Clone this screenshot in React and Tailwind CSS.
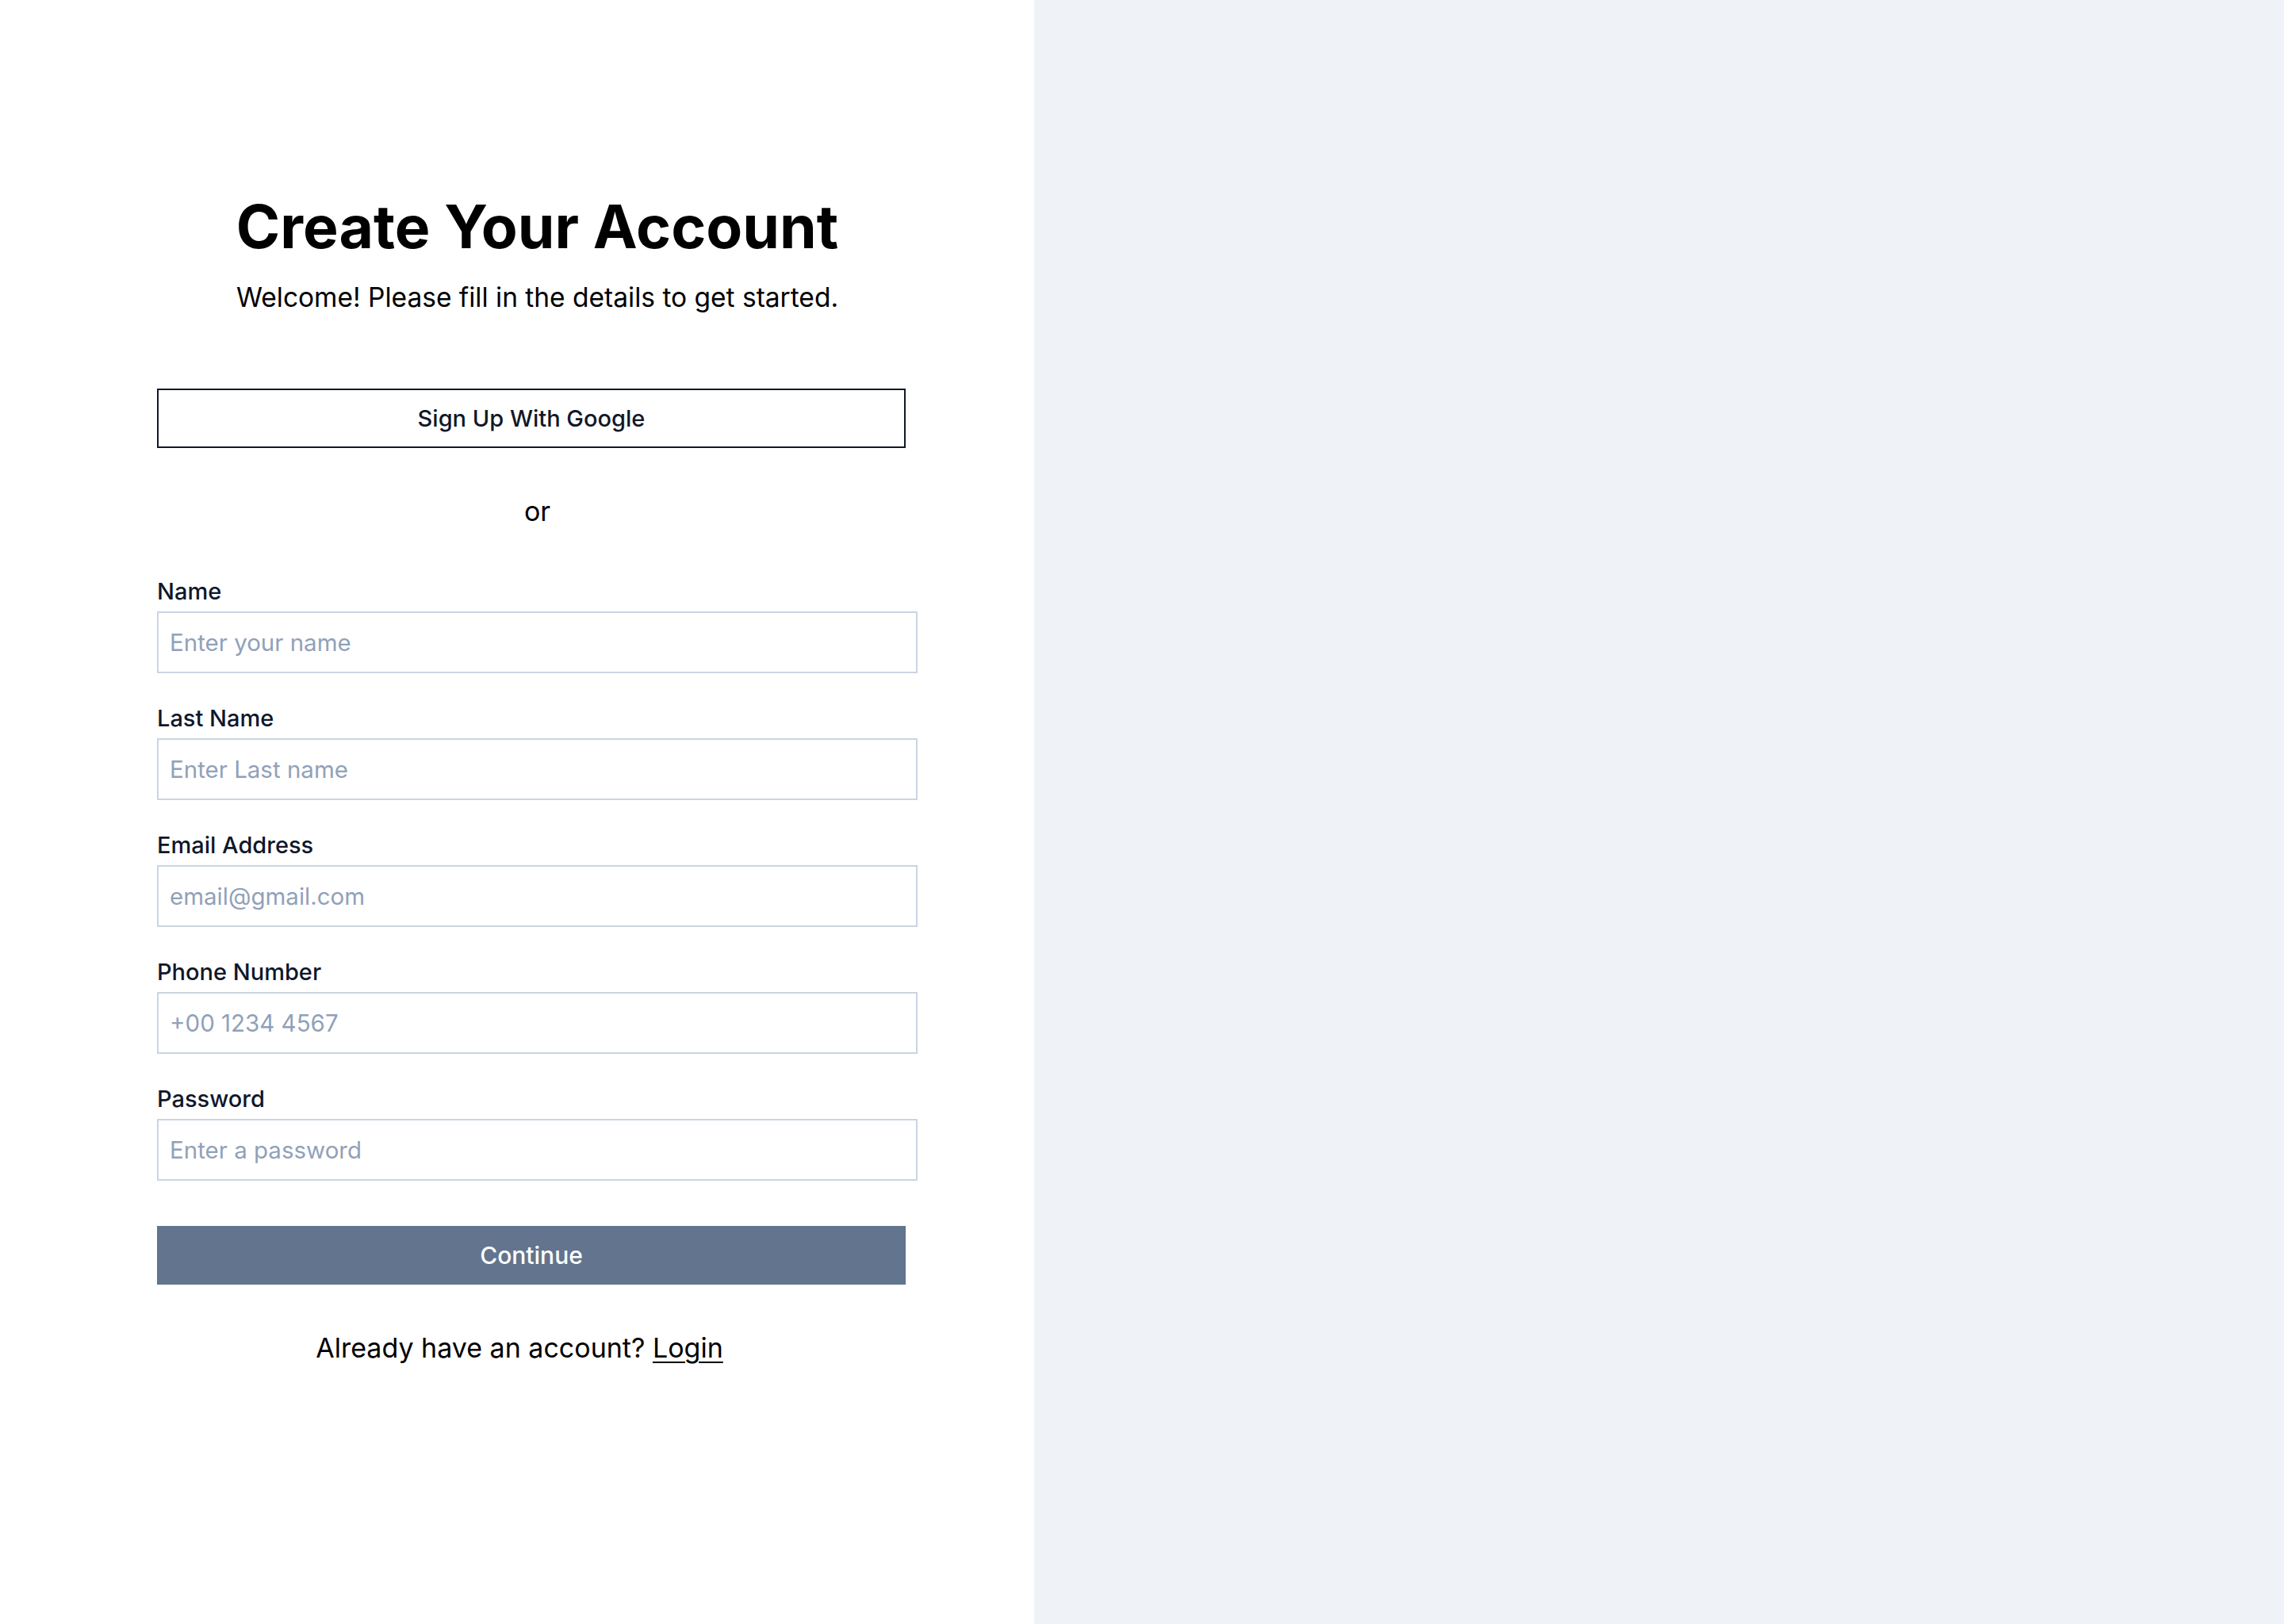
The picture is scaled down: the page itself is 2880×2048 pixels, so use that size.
import React, { useState } from 'react';

const fields = [
    { name: 'name', label: 'Name', placeholder: 'Enter your name', type: 'text' },
    { name: 'lastName', label: 'Last Name', placeholder: 'Enter Last name', type: 'text' },
    { name: 'email', label: 'Email Address', placeholder: 'email@gmail.com', type: 'email' },
    { name: 'phone', label: 'Phone Number', placeholder: '+00 1234 4567', type: 'tel' },
    { name: 'password', label: 'Password', placeholder: 'Enter a password', type: 'password' },
];

const App = () => {
    const [formData, setFormData] = useState({
        name: '',
        lastName: '',
        email: '',
        phone: '',
        password: ''
    });

    const handleChange = (e) => {
        const { name, value } = e.target;
        setFormData(prev => ({ ...prev, [name]: value }));
    };

    return (
        <div className="flex h-screen w-full font-[Inter,'Noto_Sans',sans-serif]">
            <div className="w-[1304px] shrink-0 bg-white pl-[198px] pt-[250px]">
                <div className="flex w-[959px] flex-col">
                    <h1 className="h-[72px] text-center text-[75px] font-bold leading-[72px] text-black">
                        Create Your Account
                    </h1>
                    <p className="mt-[35px] h-[36px] text-center text-[33.5px] leading-[36px] text-black">
                        Welcome! Please fill in the details to get started.
                    </p>

                    <button
                        type="button"
                        className="mt-[97px] h-[75px] w-[944px] border-2 border-gray-900 bg-white text-[29px] font-medium text-gray-900"
                    >
                        Sign Up With Google
                    </button>

                    <div className="mt-[62px] h-[36px] text-center text-[34px] leading-[36px] text-black">or</div>

                    <form className="mt-[68px] flex flex-col" onSubmit={(e) => e.preventDefault()}>
                        {fields.map((f, i) => (
                            <div key={f.name} className={`flex flex-col ${i > 0 ? 'mt-[42px]' : ''}`}>
                                <label className="h-[30px] text-[29px] font-medium leading-[30px] text-slate-900">
                                    {f.label}
                                </label>
                                <input
                                    type={f.type}
                                    name={f.name}
                                    value={formData[f.name]}
                                    onChange={handleChange}
                                    placeholder={f.placeholder}
                                    className="mt-[10px] h-[78px] w-full border-2 border-slate-300 bg-white px-[14px] text-[29.5px] text-slate-900 placeholder:text-slate-400 focus:outline-none"
                                />
                            </div>
                        ))}

                        <button
                            type="submit"
                            className="mt-[57px] h-[74px] w-[944px] bg-slate-500 text-[30px] font-medium text-white"
                        >
                            Continue
                        </button>
                    </form>

                    <p className="mt-[62px] h-[36px] w-[914px] text-center text-[34px] leading-[36px] text-black">
                        Already have an account? <a href="#" className="underline decoration-2 underline-offset-[5px]">Login</a>
                    </p>
                </div>
            </div>
            <div className="flex-1 bg-[#eff3f8]" />
        </div>
    );
};

export default App;
